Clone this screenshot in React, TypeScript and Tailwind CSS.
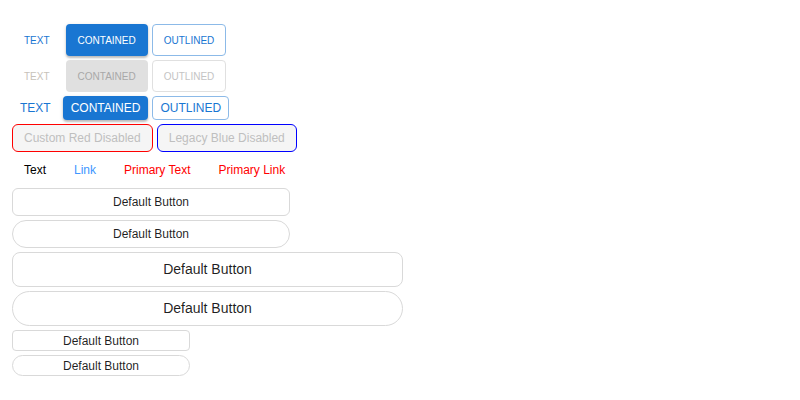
const font = { fontFamily: '"Liberation Sans", Arial, sans-serif' }

function MuiRow({ disabled, size }: { disabled?: boolean; size: 'small' | 'medium' }) {
  const base =
    size === 'small'
      ? 'h-8 px-3 text-[10px] rounded'
      : 'h-6 px-2 text-[12px] rounded'
  const outlinedPad = size === 'small' ? 'h-8 px-[11px] text-[10px] rounded' : 'h-6 px-[7px] text-[12px] rounded'
  return (
    <div className="flex gap-1 items-center">
      <button className={`${base} ${disabled ? 'text-[#c7c2ba]' : 'text-[#1976d2]'}`}>TEXT</button>
      <button
        className={`${base} ${
          disabled
            ? 'bg-[#e0e0e0] text-[#a8a8a8]'
            : 'bg-[#1976d2] text-white shadow-[0_2px_2px_rgba(0,0,0,0.2),0_1px_4px_rgba(0,0,0,0.12)]'
        }`}
      >
        CONTAINED
      </button>
      <button
        className={`${outlinedPad} border ${
          disabled ? 'border-[#e0e0e0] text-[#c4c4c4]' : 'border-[#8cbae8] text-[#1976d2]'
        }`}
      >
        OUTLINED
      </button>
    </div>
  )
}

export default function App() {
  return (
    <div className="min-h-[400px] bg-white pt-6 pl-3 text-[rgba(0,0,0,0.88)]" style={font}>
      <div className="flex flex-col gap-1 items-start">
        <MuiRow size="small" />
        <MuiRow size="small" disabled />
        <MuiRow size="medium" />

        <div className="flex gap-1">
          <button className="h-7 px-[11px] text-[12px] rounded-md border border-[#ff0000] bg-[#f5f5f5] text-[#bfbfbf]">
            Custom Red Disabled
          </button>
          <button className="h-7 px-[11px] text-[12px] rounded-md border border-[#0000ff] bg-[#f5f5f5] text-[#bfbfbf]">
            Legacy Blue Disabled
          </button>
        </div>

        <div className="flex gap-1 items-center h-7 text-[12px]">
          <button className="px-3 text-black">Text</button>
          <button className="px-3 text-[#4096ff]">Link</button>
          <button className="px-3 text-[#ff0000]">Primary Text</button>
          <button className="px-3 text-[#ff0000]">Primary Link</button>
        </div>

        <button className="w-[278px] h-7 text-[12px] rounded-md border border-[#d9d9d9] bg-white">
          Default Button
        </button>
        <button className="w-[278px] h-7 text-[12px] rounded-full border border-[#d9d9d9] bg-white">
          Default Button
        </button>
        <button className="w-[391px] h-[35px] text-[14px] rounded-lg border border-[#d9d9d9] bg-white">
          Default Button
        </button>
        <button className="w-[391px] h-[35px] text-[14px] rounded-full border border-[#d9d9d9] bg-white">
          Default Button
        </button>
        <button className="w-[178px] h-[21px] text-[12px] rounded border border-[#d9d9d9] bg-white">
          Default Button
        </button>
        <button className="w-[178px] h-[21px] text-[12px] rounded-full border border-[#d9d9d9] bg-white">
          Default Button
        </button>
      </div>
    </div>
  )
}
